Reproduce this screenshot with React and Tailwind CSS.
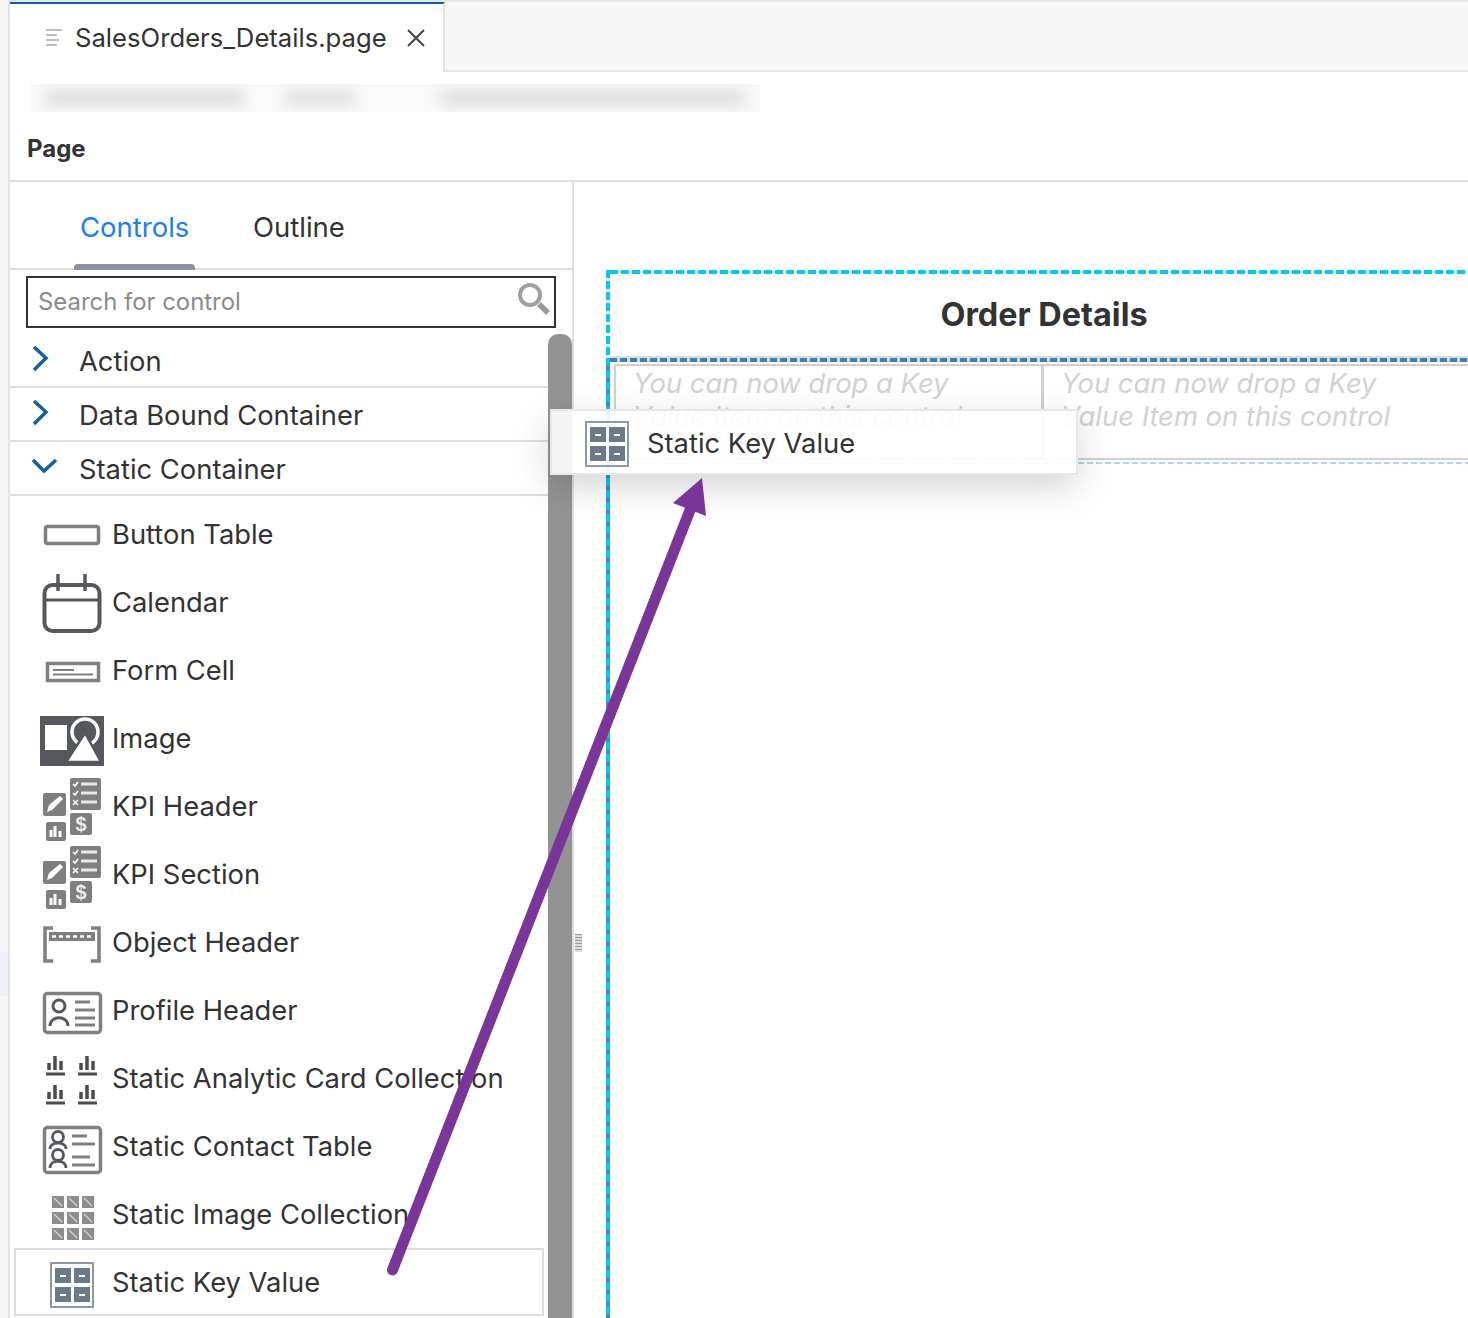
const gray = "#7f7f7f";

const ButtonIcon = () => (
  <svg width="64" height="24" viewBox="0 0 64 24">
    <rect x="5.500" y="3.500" width="53" height="17" rx="2" fill="none" stroke={gray} strokeWidth="3.500" />
  </svg>
);

const CalendarIcon = () => (
  <svg width="64" height="60" viewBox="0 0 64 60">
    <rect x="4.500" y="11" width="55" height="46" rx="8" fill="none" stroke="#55585c" strokeWidth="4" />
    <path d="M4.500 26H59.500" stroke="#55585c" strokeWidth="3" />
    <path d="M18 0V17M45 0V17" stroke="#55585c" strokeWidth="3.500" />
  </svg>
);

const FormCellIcon = () => (
  <svg width="64" height="24" viewBox="0 0 64 24">
    <rect x="7.500" y="3.500" width="51" height="17" fill="none" stroke={gray} strokeWidth="3.500" />
    <path d="M13 10H34M13 14.500H53" stroke={gray} strokeWidth="2" />
  </svg>
);

const ImageIcon = () => (
  <svg width="64" height="50" viewBox="0 0 64 50">
    <rect width="64" height="50" fill="#55585c" />
    <rect x="5" y="9" width="22" height="25" fill="#fff" />
    <circle cx="45" cy="16" r="13" fill="none" stroke="#fff" strokeWidth="3.500" />
    <path d="M45 17L26 46H61Z" fill="#fff" stroke="#55585c" strokeWidth="2.500" />
  </svg>
);

const KpiIcon = () => (
  <svg width="64" height="64" viewBox="0 0 64 64">
    <rect x="30" y="0" width="31" height="32" rx="2" fill={gray} />
    <path d="M41 6H57M41 15H57M41 24H57" stroke="#e8e8e8" strokeWidth="3" />
    <path d="M33 6L35 8L38 4M33 15L35 17L38 13M33 22L38 27M38 22L33 27" stroke="#fff" strokeWidth="1.600" fill="none" />
    <rect x="3" y="15" width="23" height="23" rx="2" fill={gray} />
    <path d="M7 34L9 27L20 18L23 21L12 32Z" fill="#fff" />
    <rect x="6" y="44" width="20" height="19" rx="2" fill={gray} />
    <path d="M11 59V52M15 59V48M20 59V53" stroke="#fff" strokeWidth="3" />
    <rect x="30" y="35" width="22" height="22" rx="2" fill={gray} />
    <text x="41" y="53" textAnchor="middle" fill="#eee" fontFamily="Liberation Sans" fontWeight="700" fontSize="20">$</text>
  </svg>
);

const ObjectHeaderIcon = () => (
  <svg width="64" height="38" viewBox="0 0 64 38">
    <path d="M13 2H5V35H13M51 2H59V35H51" fill="none" stroke={gray} strokeWidth="3.500" />
    <rect x="9" y="6" width="46" height="9" fill={gray} />
    <path d="M12 10.500H52" stroke="#fff" strokeWidth="2.500" strokeDasharray="4 3" />
  </svg>
);

const ProfileIcon = () => (
  <svg width="64" height="44" viewBox="0 0 64 44">
    <rect x="4.500" y="2.500" width="56" height="39" rx="3" fill="none" stroke={gray} strokeWidth="3.500" />
    <circle cx="19" cy="15" r="6" fill="none" stroke="#55585c" strokeWidth="3" />
    <path d="M10 35C10 24 28 24 28 35" fill="none" stroke="#55585c" strokeWidth="3" />
    <path d="M35 11H50M35 19H55M35 27H55M35 34H55" stroke={gray} strokeWidth="3" />
  </svg>
);

const AnalyticIcon = () => {
  const chart = (x, y) => (
    <g key={`${x}-${y}`} transform={`translate(${x} ${y})`}>
      <path d="M3 14V7M9 14V0M15 14V5" stroke="#4c4c4c" strokeWidth="3.500" />
      <path d="M0 18H19" stroke="#4c4c4c" strokeWidth="3" />
    </g>
  );
  return (
    <svg width="64" height="50" viewBox="0 0 64 50">
      {chart(6, 1)}
      {chart(38, 1)}
      {chart(6, 30)}
      {chart(38, 30)}
    </svg>
  );
};

const ContactIcon = () => (
  <svg width="64" height="50" viewBox="0 0 64 50">
    <rect x="4.500" y="2.500" width="56" height="45" rx="3" fill="none" stroke={gray} strokeWidth="3.500" />
    <circle cx="18" cy="12" r="5.500" fill="none" stroke="#55585c" strokeWidth="2.800" />
    <path d="M10 24C10 16 26 16 26 24" fill="none" stroke="#55585c" strokeWidth="2.800" />
    <circle cx="18" cy="30" r="5.500" fill="none" stroke="#55585c" strokeWidth="2.800" />
    <path d="M10 43C10 34 26 34 26 43" fill="none" stroke="#55585c" strokeWidth="2.800" />
    <path d="M32 11H47M32 19H55M32 32H50M32 40H55" stroke={gray} strokeWidth="3" />
  </svg>
);

const ImageCollectionIcon = () => {
  const cells = [];
  for (let r = 0; r < 3; r++) {
    for (let c = 0; c < 3; c++) {
      const x = 12 + c * 15;
      const y = 2 + r * 16;
      cells.push(
        <g key={`${r}-${c}`}>
          <rect x={x} y={y} width="12" height="12" fill="#8d8d8d" />
          <path d={`M${x + 2} ${y + 2}L${x + 10} ${y + 10}`} stroke="#cfcfcf" strokeWidth="1.400" />
        </g>
      );
    }
  }
  return (
    <svg width="64" height="46" viewBox="0 0 64 46">
      {cells}
    </svg>
  );
};

const KeyValueIcon = ({ width = 64, x = 10 }) => (
  <svg width={width} height="46" viewBox={`0 0 ${width} 46`}>
    <g transform={`translate(${x} 0)`}>
      <rect x="1" y="1" width="42" height="44" fill="none" stroke="#8d99a3" strokeWidth="2" />
      {[[5, 6], [24, 6], [5, 25], [24, 25]].map(([a, b]) => (
        <g key={`${a}-${b}`}>
          <rect x={a} y={b} width="16" height="15" fill="#6b7a86" />
          <path d={`M${a + 5} ${b + 8}H${a + 11}`} stroke="#fff" strokeWidth="2" />
        </g>
      ))}
    </g>
  </svg>
);

const items = [
  { name: "Button Table", icon: <ButtonIcon />, pad: "" },
  { name: "Calendar", icon: <CalendarIcon />, pad: "pt-[2px]" },
  { name: "Form Cell", icon: <FormCellIcon />, pad: "pt-[2px]" },
  { name: "Image", icon: <ImageIcon />, pad: "pt-[4px]" },
  { name: "KPI Header", icon: <KpiIcon />, pad: "pt-[6px]" },
  { name: "KPI Section", icon: <KpiIcon />, pad: "pt-[6px]" },
  { name: "Object Header", icon: <ObjectHeaderIcon />, pad: "pt-[4px]" },
  { name: "Profile Header", icon: <ProfileIcon />, pad: "pt-[4px]" },
  { name: "Static Analytic Card Collection", icon: <AnalyticIcon />, pad: "pt-[2px]" },
  { name: "Static Contact Table", icon: <ContactIcon />, pad: "pt-[6px]" },
  { name: "Static Image Collection", icon: <ImageCollectionIcon />, pad: "pt-[4px]" },
];

const Chevron = ({ open }) => (
  <svg width="30" height="28" viewBox="0 0 30 28" className={open ? "shrink-0 mb-[6px]" : "shrink-0 mb-[3px]"}>
    <path
      d={open ? "M3 9L14 20L26 9" : "M4 2L16 13L4 25"}
      fill="none"
      stroke="#14609c"
      strokeWidth="3.500"
    />
  </svg>
);

const Section = ({ name, open }) => (
  <div className="h-[54px] flex items-center pl-[20px] gap-[19px] border-b-2 border-[#dedede]">
    <Chevron open={open} />
    <span className="pt-[4px]">{name}</span>
  </div>
);

const DropCell = ({ className }) => (
  <div className={`w-[430px] h-[96px] pl-[17px] pr-[70px] pt-[1px] text-[27.400px] leading-[33px] italic text-[#d2d2d2] ${className}`}>
    You can now drop a Key Value Item on this control
  </div>
);

export default function App() {
  return (
    <div className="relative w-[1468px] h-[1318px] overflow-hidden bg-white flex font-['Inter',sans-serif] text-[27.350px] text-[#333]">
      <div className="w-[10px] shrink-0 bg-[#f6f6f6] border-r-2 border-[#e4e4e4]">
        <div className="mt-[952px] h-[44px] bg-[#eef0f9]" />
      </div>

      <div className="flex-1 min-w-0 flex flex-col">
        {/* tab strip */}
        <div className="h-[72px] flex bg-[#f7f7f7] border-t-2 border-[#e6e6e6]">
          <div className="w-[435px] bg-white border-t-2 border-r-2 border-t-[#0a5fb4] border-r-[#e2e2e2] flex items-center pl-[35px] gap-[12px]">
            <svg width="18" height="20" viewBox="0 0 18 20">
              <path d="M1 2H17M1 7H12M1 12H14M1 17H12" stroke="#bdbdbd" strokeWidth="2" />
            </svg>
            <span className="text-[25.670px]">SalesOrders_Details.page</span>
            <svg width="20" height="20" viewBox="0 0 20 20" className="ml-[7px]">
              <path d="M2 2L18 18M18 2L2 18" stroke="#444" strokeWidth="2" />
            </svg>
          </div>
          <div className="flex-1 border-b-2 border-[#e6e6e6]" />
        </div>

        {/* blurred breadcrumb */}
        <div className="h-[40px] flex items-end pl-[20px]">
          <div className="w-[730px] h-[28px] bg-[#fafafa] flex items-center pl-[15px] overflow-hidden">
            <div className="w-[200px] h-[18px] bg-[#e0e0e0] blur-[7px]" />
            <div className="ml-[40px] w-[70px] h-[18px] bg-[#e2e2e2] blur-[7px]" />
            <div className="ml-[85px] w-[305px] h-[18px] bg-[#e0e0e0] blur-[7px]" />
          </div>
        </div>

        <div className="h-[70px] flex items-center pl-[17px] border-b-2 border-[#dfdfdf] text-[24px] font-bold pt-[6px]">
          Page
        </div>

        <div className="flex-1 min-h-0 flex">
          {/* controls panel */}
          <div className="w-[564px] shrink-0 border-r-2 border-[#dfdfdf] flex flex-col overflow-hidden">
            <div className="h-[88px] shrink-0 flex pl-[64px] gap-[52px] border-b-2 border-[#dedede] text-[27.500px]">
              <div className="relative w-[121px] pl-[6px] pt-[25px] text-[#1a7ff0]">
                Controls
                <div className="absolute left-0 right-0 bottom-[-2px] h-[6px] rounded-t-[4px] bg-[#8a939f]" />
              </div>
              <div className="pl-[6px] pt-[25px]">Outline</div>
            </div>

            <div className="h-[64px] shrink-0 pl-[16px] pt-[6px]">
              <div className="w-[530px] h-[52px] border-2 border-[#333] flex items-center justify-between pl-[10px] pr-[3px] text-[23.900px] text-[#8a8a8a]">
                <span>Search for control</span>
                <svg width="34" height="34" viewBox="0 0 34 34" className="mb-[4px] blur-[0.5px]">
                  <circle cx="13" cy="12" r="10" fill="none" stroke="#a0a0a0" strokeWidth="4" />
                  <path d="M22 21L31 30" stroke="#9a9a9a" strokeWidth="5.500" />
                </svg>
              </div>
            </div>

            <div className="flex-1 min-h-0 flex">
              <div className="w-[538px] shrink-0">
                <Section name="Action" />
                <Section name="Data Bound Container" />
                <Section name="Static Container" open />
                <div className="pt-[4px]">
                  {items.map((item) => (
                    <div key={item.name} className="h-[68px] flex items-center pl-[30px] gap-[8px] pt-[2px] whitespace-nowrap">
                      <div className={`w-[64px] flex justify-center blur-[0.5px] ${item.pad}`}>{item.icon}</div>
                      <span>{item.name}</span>
                    </div>
                  ))}
                  <div className="ml-[4px] w-[530px] h-[68px] flex items-center pl-[24px] gap-[8px] pt-[2px] border-2 border-[#dcdce3]">
                    <div className="pt-[4px] blur-[0.4px]">
                      <KeyValueIcon />
                    </div>
                    <span>Static Key Value</span>
                  </div>
                </div>
              </div>
              <div className="w-[24px] bg-[#939393] rounded-t-[10px]" />
            </div>
          </div>

          {/* splitter + canvas */}
          <div className="w-[32px] shrink-0 flex items-center pl-[1px]">
            <div className="w-[7px] h-[18px] mt-[386px] bg-[repeating-linear-gradient(#999_0px,#999_1px,#ddd_1px,#ddd_3px)]" />
          </div>
          <div className="pt-[88px] flex">
            <div className="w-[4px] flex flex-col">
              <div className="h-[88px] bg-[repeating-linear-gradient(#00c8ff_0px,#00c8ff_8px,transparent_8px,transparent_11px)]" />
              <div className="flex-1 bg-[repeating-linear-gradient(#00c8ff_0px,#00c8ff_8px,#5a7fb5_8px,#5a7fb5_12px)]" />
            </div>
            <div className="w-[868px] flex flex-col">
              <div className="h-[4px] bg-[repeating-linear-gradient(to_right,#00c8ff_0px,#00c8ff_8px,transparent_8px,transparent_11px)]" />
              <div className="h-[82px] flex items-center justify-center text-[32.400px] font-bold">Order Details</div>
              <div className="h-[2px] bg-[#dddddd]" />
              <div className="h-[4px] bg-[repeating-linear-gradient(to_right,#3f7fb5_0px,#3f7fb5_7px,#cfdce8_7px,#cfdce8_10px)]" />
              <div className="flex pl-[4px] pt-[2px]">
                <DropCell className="border-t-2 border-l-2 border-r-[3px] border-[#d0d0d0] border-b-2" />
                <DropCell className="border-t-2 border-b-2 border-[#d0d0d0]" />
              </div>
              <div className="mt-[2px] h-[2px] bg-[repeating-linear-gradient(to_right,#a8dbe8_0px,#a8dbe8_6px,transparent_6px,transparent_9px)]" />
            </div>
          </div>
        </div>
      </div>

      {/* drag ghost */}
      <div className="absolute left-[550px] top-[409px] w-[528px] h-[66px] bg-white/90 border-2 border-[#e6e6ec] shadow-[0_12px_36px_rgba(0,0,0,0.17)] flex items-center pl-[33px] gap-[18px] pt-[4px]">
        <div className="blur-[0.4px]">
          <KeyValueIcon width={44} x={0} />
        </div>
        <span>Static Key Value</span>
      </div>

      {/* annotation arrow */}
      <svg width="1468" height="1318" viewBox="0 0 1468 1318" className="absolute left-0 top-0 pointer-events-none">
        <path d="M392.500 1270L692 505" stroke="#7a3598" strokeWidth="11" strokeLinecap="round" />
        <path d="M702 478L673 503L706 516Z" fill="#7a3598" />
      </svg>
    </div>
  );
}
